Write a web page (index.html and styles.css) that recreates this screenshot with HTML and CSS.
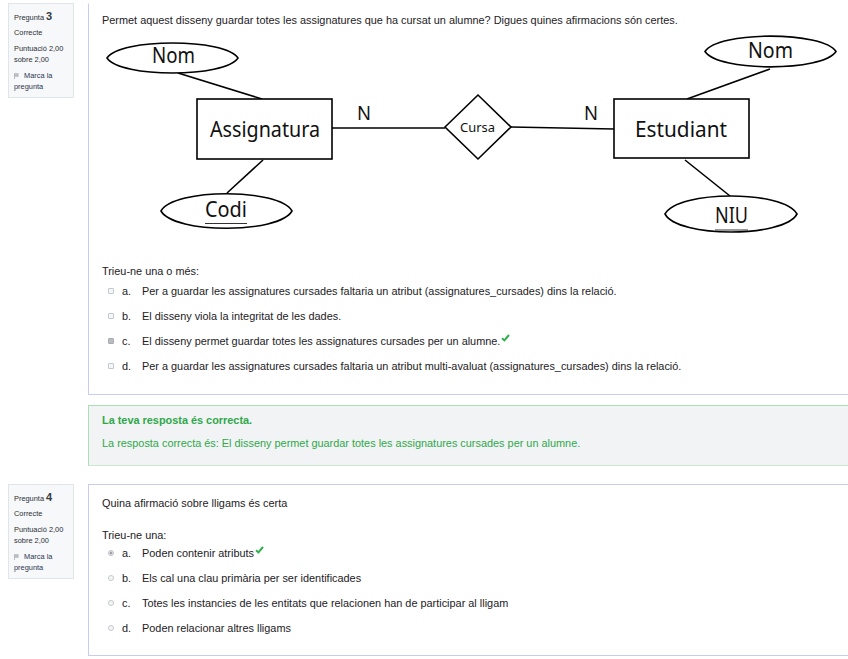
FILE: index.html
```html
<!DOCTYPE html>
<html lang="ca">
<head>
<meta charset="utf-8">
<title>Qüestionari</title>
<link rel="stylesheet" href="styles.css">
</head>
<body>
<div class="page">

  <div class="que">
    <div class="info">
      <h3 class="qno">Pregunta <span class="num">3</span></h3>
      <div class="state">Correcte</div>
      <div class="grade">Puntuació 2,00 sobre 2,00</div>
      <div class="flag">
        <svg class="flag-ic" width="5" height="6" viewBox="0 0 5 6"><path d="M0.5 0.5 V6 M0.5 0.8 H4.5 L3.5 2 L4.5 3.2 H0.5" fill="#c9ccd2" stroke="#9aa0a8" stroke-width="0.7"/></svg>
        Marca la pregunta
      </div>
    </div>
    <div class="content">
      <div class="formulation first">
        <div class="qtext">Permet aquest disseny guardar totes les assignatures que ha cursat un alumne? Digues quines afirmacions són certes.</div>
        <svg class="er" width="740" height="215" viewBox="100 28 740 215" font-family="'Noto Sans', 'Open Sans', sans-serif" fill="none" stroke="#000" stroke-width="1.6">
          <path d="M178 73 L262 99"/>
          <path d="M263 160 L227 193"/>
          <path d="M332 128 L445 128"/>
          <path d="M511 127 L614 129"/>
          <path d="M770 69 L687 99"/>
          <path d="M685 160 L730 196"/>
          <path d="M107 58 C120 38 225 38 238 58 C225 78 120 78 107 58 Z" fill="#fff"/>
          <path d="M161 211 C174 188 279 188 292 211 C279 234 174 234 161 211 Z" fill="#fff"/>
          <path d="M705 51.5 C718 31 823 31 836 51.5 C823 72 718 72 705 51.5 Z" fill="#fff"/>
          <path d="M665 214 C678 190 784 190 797 214 C784 238 678 238 665 214 Z" fill="#fff"/>
          <rect x="197" y="99" width="135" height="60" fill="#fff"/>
          <rect x="614" y="99" width="135" height="59" fill="#fff"/>
          <path d="M445 127 L478 95 L511 127 L478 159 Z" fill="#fff"/>
          <g fill="#111" stroke="none" font-size="21">
            <text x="152" y="63" textLength="43" lengthAdjust="spacingAndGlyphs">Nom</text>
            <text x="210" y="137" textLength="110" lengthAdjust="spacingAndGlyphs">Assignatura</text>
            <text x="205" y="217" textLength="42" lengthAdjust="spacingAndGlyphs">Codi</text>
            <text x="748" y="58" textLength="45" lengthAdjust="spacingAndGlyphs">Nom</text>
            <text x="635" y="137" textLength="92" lengthAdjust="spacingAndGlyphs">Estudiant</text>
            <text x="715" y="223" textLength="33" lengthAdjust="spacingAndGlyphs">NIU</text>
            <text x="357" y="120" font-size="20" textLength="14" lengthAdjust="spacingAndGlyphs">N</text>
            <text x="584" y="120" font-size="20" textLength="14" lengthAdjust="spacingAndGlyphs">N</text>
            <text x="460" y="132" font-size="12.5" textLength="35" lengthAdjust="spacingAndGlyphs">Cursa</text>
          </g>
          <path d="M205 223.5 H247 M715 230 H748" stroke="#333" stroke-width="1"/>
        </svg>
        <div class="prompt">Trieu-ne una o més:</div>
        <div class="answers">
          <div class="opt"><span class="box"></span><span class="let">a.</span><span>Per a guardar les assignatures cursades faltaria un atribut (assignatures_cursades) dins la relació.</span></div>
          <div class="opt"><span class="box"></span><span class="let">b.</span><span>El disseny viola la integritat de les dades.</span></div>
          <div class="opt"><span class="box checked"></span><span class="let">c.</span><span>El disseny permet guardar totes les assignatures cursades per un alumne.</span><svg class="ok" width="9" height="8" viewBox="0 0 9 8"><path d="M1 4.2 L3.4 6.4 L8 1" fill="none" stroke="#2fae4c" stroke-width="2"/></svg></div>
          <div class="opt"><span class="box"></span><span class="let">d.</span><span>Per a guardar les assignatures cursades faltaria un atribut multi-avaluat (assignatures_cursades) dins la relació.</span></div>
        </div>
      </div>
      <div class="outcome">
        <div class="fb-strong">La teva resposta és correcta.</div>
        <div class="fb-right">La resposta correcta és: El disseny permet guardar totes les assignatures cursades per un alumne.</div>
      </div>
    </div>
  </div>

  <div class="que">
    <div class="info">
      <h3 class="qno">Pregunta <span class="num">4</span></h3>
      <div class="state">Correcte</div>
      <div class="grade">Puntuació 2,00 sobre 2,00</div>
      <div class="flag">
        <svg class="flag-ic" width="5" height="6" viewBox="0 0 5 6"><path d="M0.5 0.5 V6 M0.5 0.8 H4.5 L3.5 2 L4.5 3.2 H0.5" fill="#c9ccd2" stroke="#9aa0a8" stroke-width="0.7"/></svg>
        Marca la pregunta
      </div>
    </div>
    <div class="content">
      <div class="formulation q4">
        <div class="qtext">Quina afirmació sobre lligams és certa</div>
        <div class="prompt p4">Trieu-ne una:</div>
        <div class="answers a4">
          <div class="opt"><span class="radio checked"></span><span class="let">a.</span><span>Poden contenir atributs</span><svg class="ok" width="9" height="8" viewBox="0 0 9 8"><path d="M1 4.2 L3.4 6.4 L8 1" fill="none" stroke="#2fae4c" stroke-width="2"/></svg></div>
          <div class="opt"><span class="radio"></span><span class="let">b.</span><span>Els cal una clau primària per ser identificades</span></div>
          <div class="opt"><span class="radio"></span><span class="let">c.</span><span>Totes les instancies de les entitats que relacionen han de participar al lligam</span></div>
          <div class="opt"><span class="radio"></span><span class="let">d.</span><span>Poden relacionar altres lligams</span></div>
        </div>
      </div>
    </div>
  </div>

</div>
</body>
</html>
```
FILE: styles.css
```css
html, body {
  margin: 0;
  padding: 0;
  overflow: hidden;
  background: #fff;
}
body {
  font-family: "Liberation Sans", Arial, sans-serif;
  color: #1d2125;
}
.page {
  padding-top: 3px;
  width: 880px;
}
.que {
  display: flex;
  align-items: flex-start;
  margin-bottom: 18px;
}
.info {
  width: 66px;
  box-sizing: border-box;
  margin-left: 8px;
  margin-right: 14px;
  background: #f7f8fa;
  border: 1px solid #e1e4e8;
  padding: 6px 2px 4px 5px;
  font-size: 7.4px;
  line-height: 11.5px;
  color: #2a2f36;
}
.qno {
  margin: 0 0 3px;
  font-size: 7.4px;
  font-weight: normal;
  line-height: 12px;
}
.num {
  font-size: 11px;
  font-weight: bold;
  color: #343a40;
}
.state {
  margin-bottom: 4px;
}
.grade {
  margin-bottom: 4px;
}
.flag {
  color: #2a3550;
}
.flag-ic {
  margin-right: 3px;
  vertical-align: -1px;
}
.content {
  width: 780px;
  flex: none;
}
.formulation {
  border: 1px solid #c8cdef;
  padding: 9px 0 16px 13px;
}
.formulation.first {
  border-top-color: transparent;
}
.formulation.q4 {
  padding-top: 11px;
  padding-bottom: 15px;
}
.qtext {
  font-size: 10.9px;
  line-height: 14px;
}
.er {
  display: block;
  margin: 1px 0 0 -2px;
}
.prompt {
  font-size: 10.9px;
  line-height: 14px;
  margin-top: 21px;
}
.prompt.p4 {
  margin-top: 18px;
}
.answers {
  padding-left: 6px;
}
.answers.a4 {
  margin-top: -2px;
}
.opt {
  display: flex;
  align-items: center;
  height: 25px;
  font-size: 10.9px;
}
.box, .radio {
  width: 6px;
  height: 6px;
  box-sizing: border-box;
  border: 1px solid #c4c7cc;
  background: #f5f6f7;
  margin-right: 8px;
  flex: none;
}
.box {
  border-radius: 1px;
}
.box.checked {
  background: #b9bcc1;
  border-color: #a9acb1;
}
.radio {
  border-radius: 50%;
}
.radio.checked {
  background: radial-gradient(circle, #9da1a7 0 1.5px, #e6e7e9 1.6px);
  border-color: #c0c3c8;
}
.let {
  width: 20px;
  flex: none;
}
.ok {
  margin-left: 1px;
  margin-top: -6px;
}
.outcome {
  margin-top: 10px;
  background: #f2f3f5;
  border: 1px solid #a9dfb3;
  border-bottom-color: #c9e8cf;
  padding: 7px 0 15px 13px;
  color: #2ea84a;
  font-size: 10.9px;
  line-height: 14px;
}
.fb-strong {
  font-weight: bold;
  margin-bottom: 9px;
}
```
